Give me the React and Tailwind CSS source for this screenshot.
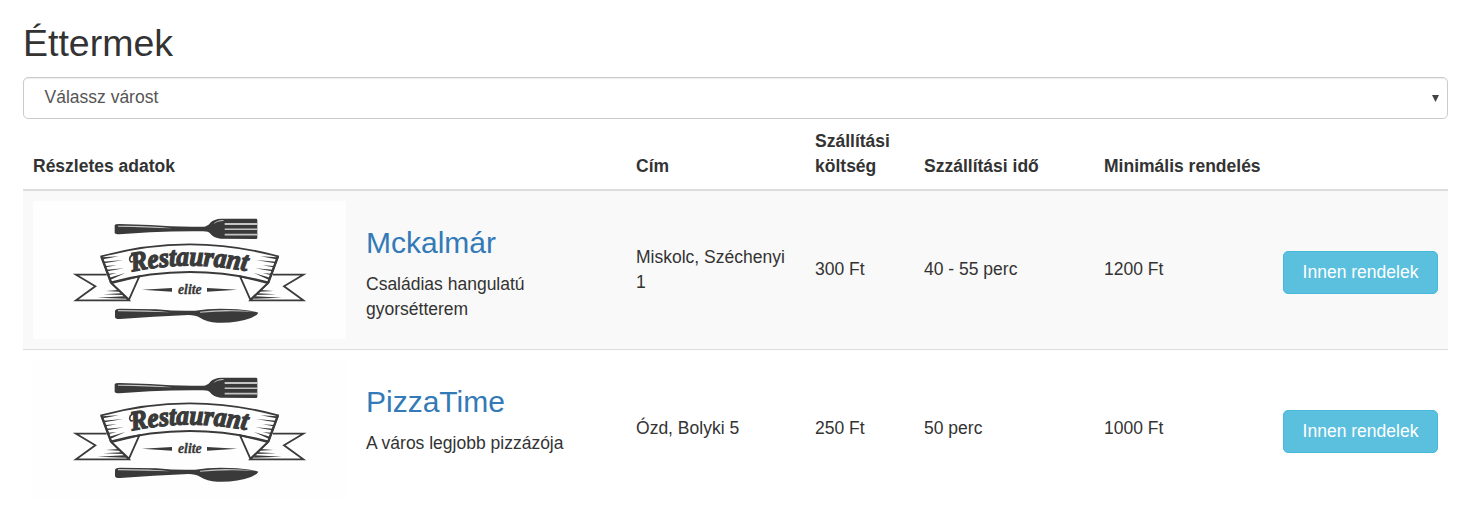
import React from "react";

const restaurants = [
  {
    name: "Mckalmár",
    description: "Családias hangulatú gyorsétterem",
    address: "Miskolc, Széchenyi 1",
    fee: "300 Ft",
    time: "40 - 55 perc",
    minimum: "1200 Ft",
  },
  {
    name: "PizzaTime",
    description: "A város legjobb pizzázója",
    address: "Ózd, Bolyki 5",
    fee: "250 Ft",
    time: "50 perc",
    minimum: "1000 Ft",
  },
];

// One folded end of the ribbon; the other end is its mirror image.
function RibbonEnd() {
  return (
    <g>
      <path d="M140 209H48L106 244L48 286H207L154 234" fill="#fefefe" stroke="#3a3a3a" strokeWidth="5.5" />
      <path d="M207 284L238 214L154 234Z" fill="#fefefe" stroke="#3a3a3a" strokeWidth="5.5" />
      <path d="M124 154L153 232" fill="none" stroke="#3a3a3a" strokeWidth="7" />
      <path
        d="M126 157L176 154L129 163ZM130 170L190 165L133 175ZM135 183L170 181L138 187ZM139 194L192 190L142 199ZM144 206L170 204L147 210ZM148 218L196 204L152 224Z"
        fill="#3a3a3a"
      />
      <path d="M174 255L138 258L178 260ZM183 265L130 268L187 270ZM192 274L112 278L199 281Z" fill="#3a3a3a" />
    </g>
  );
}

function Logo({ id }) {
  return (
    <svg className="block h-[138px] w-[313px] bg-[#fefefe]" viewBox="0 0 313 138">
      <g transform="translate(27 4) scale(0.33333)">
        <path
          d="M164 61Q165 57 178 57L270 60Q350 67 430 65Q443 64 451 53Q462 42 484 41L588 41Q592 41 592 45V98Q592 102 588 102L482 101Q460 100 450 85Q446 79 430 79Q350 78 270 82L178 88Q166 88 164 84Z"
          fill="#3a3a3a"
        />
        <path d="M494 54H593V60H494ZM494 70.500H593V75H494ZM494 86H593V91.500H494Z" fill="#c4c4c4" />
        <path d="M174 62Q275 61 338 70Q265 67 174 65Z" fill="#c8c8c8" />
        <path d="M460 57Q472 43 493 45L488 48Q472 48 460 57Z" fill="#c4c4c4" />

        <RibbonEnd />
        <g transform="translate(778 0) scale(-1 1)">
          <RibbonEnd />
        </g>
        <path d="M124 154Q389 82 654 154L625 232Q389 170 153 232Z" fill="none" stroke="#3a3a3a" strokeWidth="5.5" />

        <path id={id} d="M216 200Q389 164 564 199" fill="none" />
        <text
          className="font-['Liberation_Serif',serif] text-[82px] font-bold italic"
          fill="#3a3a3a"
          stroke="#3a3a3a"
          strokeWidth="4"
        >
          <textPath href={"#" + id} textLength="346" lengthAdjust="spacingAndGlyphs">
            Restaurant
          </textPath>
        </text>
        <path d="M236 147Q209 147 209 163Q211 174 219 169" fill="none" stroke="#3a3a3a" strokeWidth="5" />
        <text
          x="354"
          y="267"
          textLength="71"
          lengthAdjust="spacingAndGlyphs"
          className="font-['Liberation_Serif',serif] text-[46px] font-bold italic"
          fill="#3a3a3a"
          stroke="#3a3a3a"
          strokeWidth="1"
        >
          elite
        </text>
        <path d="M246 254L336 249V260ZM532 254L441 249V260Z" fill="#3a3a3a" />

        <path
          d="M165 317Q167 311 180 311L290 313Q350 319 405 317Q455 309 510 312Q560 313 595 323Q592 331 573 339Q530 355 472 353Q441 351 420 338Q407 330 385 330Q280 335 180 342Q166 343 165 336Z"
          fill="#3a3a3a"
        />
        <path d="M174 315Q280 315 330 322Q260 321 174 319ZM420 320Q500 309 588 321Q500 315 420 323Z" fill="#c4c4c4" />
      </g>
    </svg>
  );
}

export default function App() {
  return (
    <main className="h-[506px] overflow-hidden bg-white px-[23px] pt-[22px] font-['Liberation_Sans',Arial,sans-serif] text-[17.5px] leading-[25px] text-[#333333]">
      <h2 className="h-[55px] text-[37.5px] leading-[42px] font-normal">Éttermek</h2>
      <div className="flex h-[42px] items-center justify-between rounded-[5px] border border-[#cccccc] pr-[8px] pl-[20.5px] text-[#555555] shadow-[inset_0_1px_1px_rgba(0,0,0,0.075)]">
        <span className="pb-[1px]">Válassz várost</span>
        <svg className="h-[7px] w-[7px]" viewBox="0 0 7 7">
          <path d="M0 0H7L3.5 7Z" fill="#444444" />
        </svg>
      </div>
      <table className="w-[1425px] table-fixed border-separate border-spacing-0">
        <colgroup>
          <col className="w-[333px]" />
          <col className="w-[270px]" />
          <col className="w-[179px]" />
          <col className="w-[109px]" />
          <col className="w-[180px]" />
          <col className="w-[179px]" />
          <col className="w-[175px]" />
        </colgroup>
        <thead>
          <tr className="text-left align-bottom">
            <th colSpan={2} className="border-b-2 border-[#dddddd] p-[10px]">Részletes adatok</th>
            <th className="border-b-2 border-[#dddddd] p-[10px]">Cím</th>
            <th className="border-b-2 border-[#dddddd] p-[10px]">Szállítási költség</th>
            <th className="border-b-2 border-[#dddddd] p-[10px]">Szzállítási idő</th>
            <th className="border-b-2 border-[#dddddd] p-[10px]">Minimális rendelés</th>
            <th className="border-b-2 border-[#dddddd] p-[10px]"></th>
          </tr>
        </thead>
        <tbody>
          {restaurants.map((r, i) => (
            <tr key={r.name} className="odd:bg-[#f9f9f9] [&>td]:border-[#dddddd] odd:[&>td]:border-b">
              <td className="p-[10px]">
                <Logo id={"banner-curve-" + i} />
              </td>
              <td className="px-[10px] pt-[35px] align-top">
                <h3 className="mb-[13px] text-[30px] leading-[33px] text-[#337ab7]">{r.name}</h3>
                <p className="w-[220px]">{r.description}</p>
              </td>
              <td className="px-[10px] pb-[1px] align-middle">{r.address}</td>
              <td className="px-[10px] pb-[2px] align-middle">{r.fee}</td>
              <td className="px-[10px] pb-[2px] align-middle">{r.time}</td>
              <td className="px-[10px] pb-[2px] align-middle">{r.minimum}</td>
              <td className="px-[10px] pt-[5px] align-middle">
                <button className="block h-[43px] w-[155px] rounded-[5px] border border-[#46b8da] bg-[#5bc0de] whitespace-nowrap text-white">
                  Innen rendelek
                </button>
              </td>
            </tr>
          ))}
        </tbody>
      </table>
    </main>
  );
}
